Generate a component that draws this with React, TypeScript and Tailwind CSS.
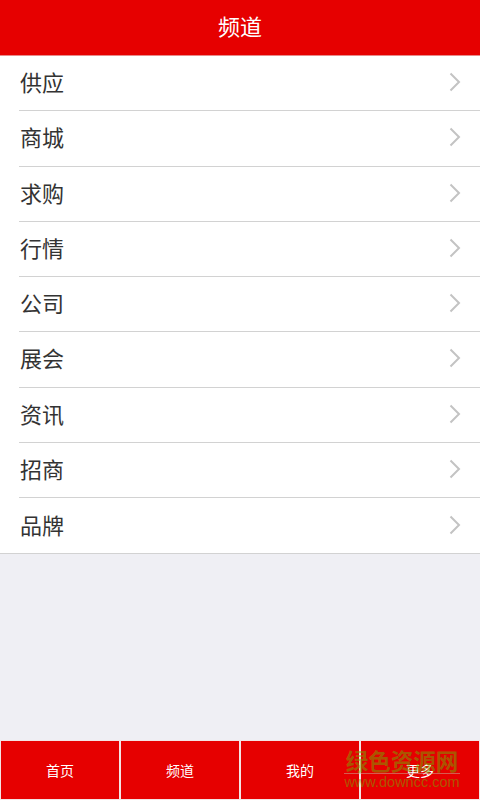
import React from "react";

const items = ["供应", "商城", "求购", "行情", "公司", "展会", "资讯", "招商", "品牌"];
const tabs = ["首页", "频道", "我的", "更多"];

function Chevron() {
  return (
    <svg width="12" height="20" viewBox="0 0 12 20" className="shrink-0 -translate-y-[1px]">
      <path d="M1.5 1.5 L10 10 L1.5 18.5" fill="none" stroke="#c3c3c3" strokeWidth="2" />
    </svg>
  );
}

export default function App() {
  const font = { fontFamily: '"Noto Sans CJK SC", "Noto Sans", sans-serif' };
  return (
    <div className="w-[480px] h-[800px] flex flex-col bg-[#efeff4] relative overflow-hidden" style={font}>
      <div className="h-[56px] bg-[#e60000] flex items-center justify-center border-b border-[#e88a8a] shrink-0">
        <span className="text-white text-[22px] leading-none -translate-y-[3px]">频道</span>
      </div>
      <div className="bg-white shrink-0">
        {items.map((t, i) => (
          <div key={t} className={i === items.length - 1 ? "border-b border-[#d2d2d2]" : "pl-[19px]"}>
            <div
              className={
                "h-[55.25px] flex items-center justify-between pr-[19px] " +
                (i === items.length - 1 ? "pl-[19px]" : "border-b border-[#d2d2d2]")
              }
            >
              <span className="text-[22px] text-[#333333] leading-none pl-[1px] -translate-y-[2px]">{t}</span>
              <Chevron />
            </div>
          </div>
        ))}
      </div>
      <div className="flex-1" />
      <div className="h-[60px] bg-[#f3e4e4] p-[1px] flex gap-[2px] shrink-0">
        {tabs.map((t) => (
          <div key={t} className="flex-1 bg-[#e60000] flex items-center justify-center">
            <span className="text-white text-[14px] leading-none">{t}</span>
          </div>
        ))}
      </div>
      <div className="absolute left-[344px] top-[747px] w-[116px] flex flex-col items-center pointer-events-none">
        <span className="text-[22.5px] font-bold leading-[26px] whitespace-nowrap text-[rgba(120,160,0,0.55)]">绿色资源网</span>
        <div className="w-full h-[1px] bg-[rgba(200,180,160,0.5)]" />
        <span
          className="text-[14.5px] leading-[16px] whitespace-nowrap text-[rgba(120,160,0,0.55)]"
          style={{ fontFamily: '"Liberation Sans", Arial, sans-serif' }}
        >
          www.downcc.com
        </span>
      </div>
    </div>
  );
}
